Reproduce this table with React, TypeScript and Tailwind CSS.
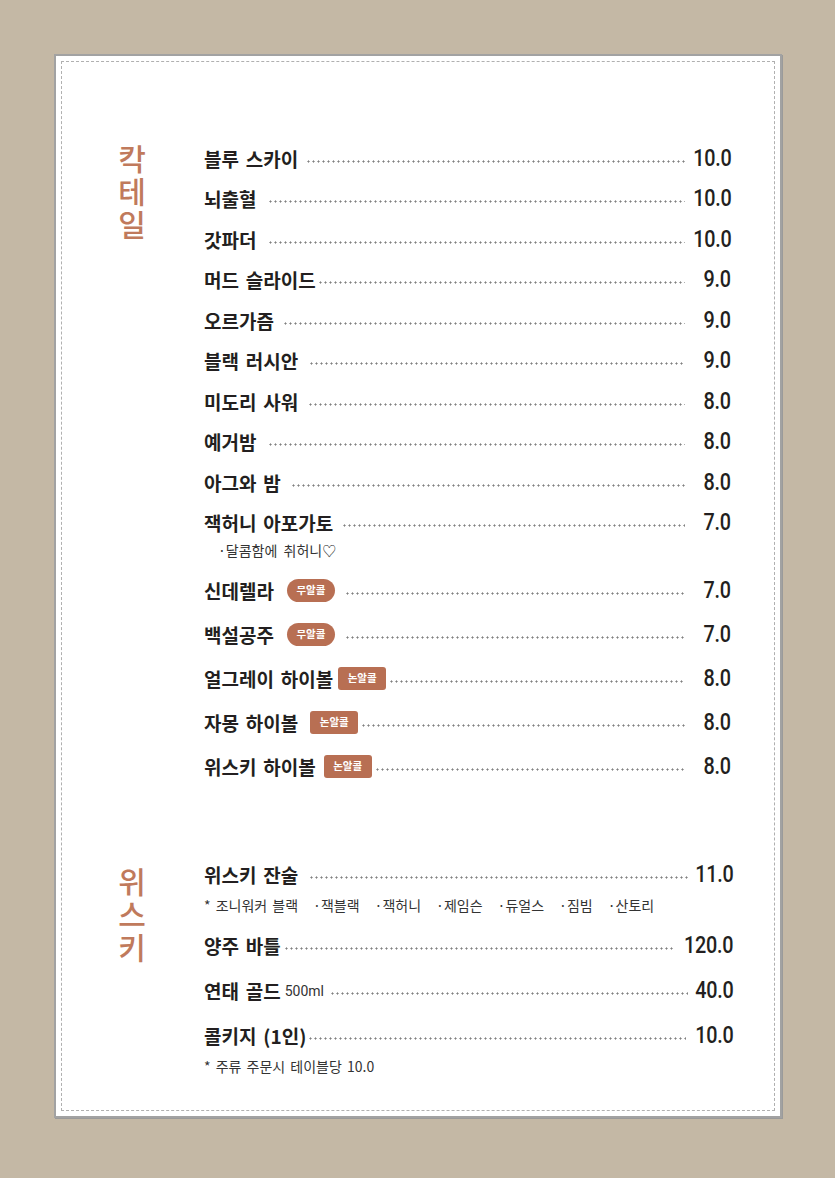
import React from "react";

const KR = "font-['Noto_Sans_CJK_KR',sans-serif]";

function Dots({ ml }: { ml: string }) {
  return (
    <div
      className={`flex-1 h-[3px] mt-[6px] bg-[radial-gradient(circle,#808080_0.85px,transparent_1.25px)] bg-[length:5px_3px] bg-repeat-x ${ml}`}
    />
  );
}

function Pill() {
  return (
    <span className="ml-[13px] flex h-[23px] w-[48px] items-center justify-center rounded-full bg-[#b86f53] text-[10.5px] font-bold leading-none text-white">
      무알콜
    </span>
  );
}

function Square({ ml }: { ml: string }) {
  return (
    <span className={`${ml} flex h-[23px] w-[48px] items-center justify-center rounded-[3px] bg-[#b86f53] text-[10.5px] font-bold leading-none text-white`}>
      논알콜
    </span>
  );
}

function Num({ v, className = "" }: { v: string; className?: string }) {
  return (
    <span
      className={`inline-block shrink-0 origin-right scale-x-[0.86] font-['Roboto',sans-serif] text-[23px] font-medium leading-none tracking-[-0.3px] text-[#231f20] ${className}`}
    >
      {v}
    </span>
  );
}

function Price({ v }: { v: string }) {
  return (
    <span className="flex w-[46px] shrink-0 justify-end">
      <Num v={v} />
    </span>
  );
}

function Name({ children }: { children: React.ReactNode }) {
  return (
    <span className="shrink-0 text-[19px] font-bold leading-none text-[#231f20] [word-spacing:2.5px]">
      {children}
    </span>
  );
}

const cocktails: { n: string; p: string; ml: string }[] = [
  { n: "블루 스카이", p: "10.0", ml: "ml-[8px]" },
  { n: "뇌출혈", p: "10.0", ml: "ml-[12px]" },
  { n: "갓파더", p: "10.0", ml: "ml-[12px]" },
  { n: "머드 슬라이드", p: "9.0", ml: "ml-[2px]" },
  { n: "오르가즘", p: "9.0", ml: "ml-[9px]" },
  { n: "블랙 러시안", p: "9.0", ml: "ml-[11px]" },
  { n: "미도리 사워", p: "8.0", ml: "ml-[10px]" },
  { n: "예거밤", p: "8.0", ml: "ml-[12px]" },
  { n: "아그와 밤", p: "8.0", ml: "ml-[10px]" },
  { n: "잭허니 아포가토", p: "7.0", ml: "ml-[9px]" },
];

export default function App() {
  return (
    <div className={`min-h-[1178px] w-[835px] bg-[#c4b8a5] pt-[54px] pl-[54px] ${KR}`}>
      <div className="h-[1064px] w-[728px] border-2 border-[#a2a2a2] bg-white p-[5px] shadow-[1px_1px_0_#9a9a9a]">
        <div className="flex h-full flex-col border border-dashed border-[#b0b0b0] pl-[55px] pr-[43px] pt-[76px]">
          {/* Cocktail section */}
          <div className="flex">
            <div className="w-[87px] shrink-0 pt-[3px]">
              <div className="w-[30px] text-center text-[30px] font-medium leading-[33px] text-[#c07a5c]">
                칵<br />테<br />일
              </div>
            </div>
            <div className="flex flex-1 flex-col">
              {cocktails.map((c) => (
                <div key={c.n} className="flex h-[40.5px] items-center">
                  <Name>{c.n}</Name>
                  <Dots ml={c.ml} />
                  <Price v={c.p} />
                </div>
              ))}
              <div className="flex h-[14px] items-center pl-[14px] text-[14px] leading-none text-[#333] [word-spacing:3px]">
                ·달콤함에 취허니♡
              </div>
              <div className="mt-[11px] flex h-[44px] items-center">
                <Name>신데렐라</Name>
                <Pill />
                <Dots ml="ml-[10px]" />
                <Price v="7.0" />
              </div>
              <div className="flex h-[44px] items-center">
                <Name>백설공주</Name>
                <Pill />
                <Dots ml="ml-[10px]" />
                <Price v="7.0" />
              </div>
              <div className="flex h-[44px] items-center">
                <Name>얼그레이 하이볼</Name>
                <Square ml="ml-[5px]" />
                <Dots ml="ml-[3px]" />
                <Price v="8.0" />
              </div>
              <div className="flex h-[44px] items-center">
                <Name>자몽 하이볼</Name>
                <Square ml="ml-[12px]" />
                <Dots ml="ml-[3px]" />
                <Price v="8.0" />
              </div>
              <div className="flex h-[44px] items-center">
                <Name>위스키 하이볼</Name>
                <Square ml="ml-[8px]" />
                <Dots ml="ml-[3px]" />
                <Price v="8.0" />
              </div>
            </div>
          </div>

          {/* Whisky section */}
          <div className="mt-[66px] flex">
            <div className="w-[87px] shrink-0 pt-[10px]">
              <div className="w-[30px] text-center text-[30px] font-medium leading-[33px] text-[#c07a5c]">
                위<br />스<br />키
              </div>
            </div>
            <div className="-mr-[2px] flex flex-1 flex-col">
              <div className="flex h-[40px] items-center">
                <Name>위스키 잔술</Name>
                <Dots ml="ml-[11px]" />
                <Num v="11.0" className="ml-[1px]" />
              </div>
              <div className="flex h-[22px] items-center gap-[15px] text-[14px] leading-none text-[#333]">
                <span className="[word-spacing:2px]">* 조니워커 블랙</span>
                <span>·잭블랙</span>
                <span>·잭허니</span>
                <span>·제임슨</span>
                <span>·듀얼스</span>
                <span>·짐빔</span>
                <span>·산토리</span>
              </div>
              <div className="mt-[7px] flex h-[45px] items-center">
                <Name>양주 바틀</Name>
                <Dots ml="ml-[3px]" />
                <Num v="120.0" className="ml-[1px]" />
              </div>
              <div className="flex h-[45px] items-center">
                <Name>연태 골드</Name>
                <span className="ml-[4px] shrink-0 font-['Roboto',sans-serif] text-[14px] leading-none text-[#333]">500ml</span>
                <Dots ml="ml-[6px]" />
                <Num v="40.0" className="ml-[1px]" />
              </div>
              <div className="flex h-[45px] items-center">
                <Name>콜키지 (1인)</Name>
                <Dots ml="ml-[2px]" />
                <Num v="10.0" className="ml-[3px]" />
              </div>
              <div className="flex h-[16px] items-center text-[14px] leading-none text-[#333] [word-spacing:2px]">
                * 주류 주문시 테이블당 10.0
              </div>
            </div>
          </div>
        </div>
      </div>
    </div>
  );
}
